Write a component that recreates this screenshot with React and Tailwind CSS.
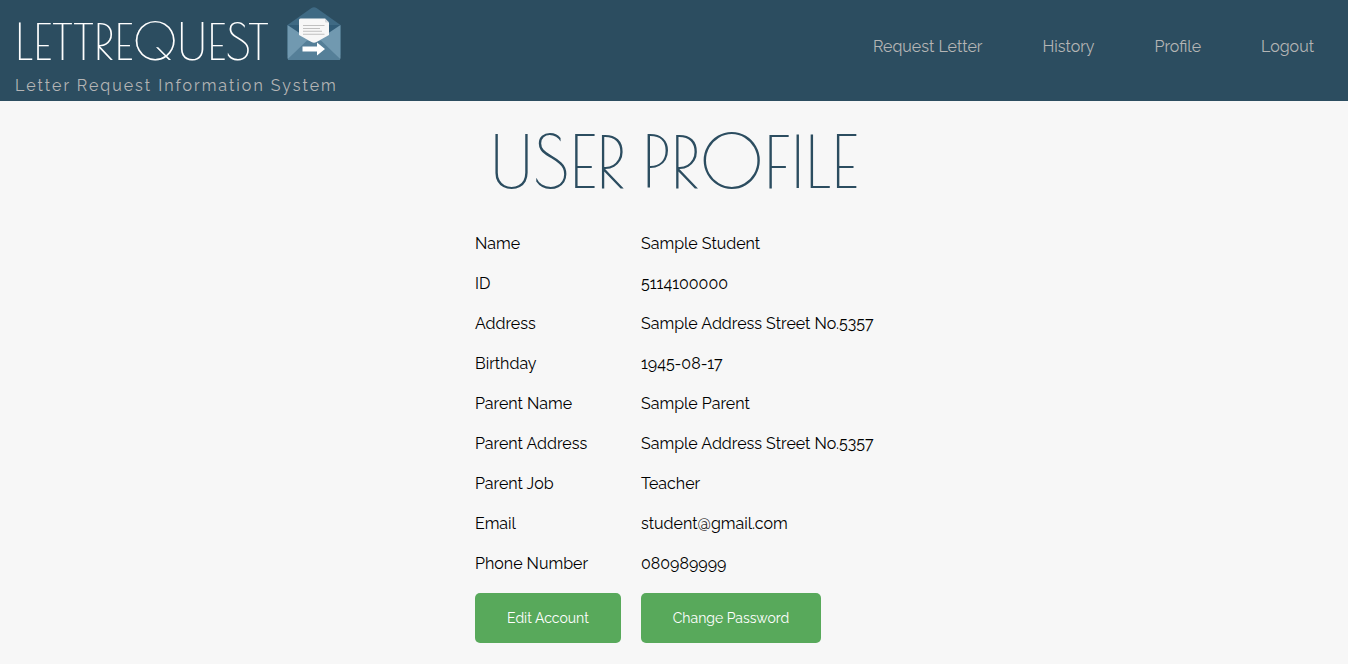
const links = ["Request Letter", "History", "Profile", "Logout"];

const details = [
  ["Name", "Sample Student"],
  ["ID", "5114100000"],
  ["Address", "Sample Address Street No.5357"],
  ["Birthday", "1945-08-17"],
  ["Parent Name", "Sample Parent"],
  ["Parent Address", "Sample Address Street No.5357"],
  ["Parent Job", "Teacher"],
  ["Email", "student@gmail.com"],
  ["Phone Number", "080989999"],
];

function EnvelopeIcon() {
  return (
    <svg viewBox="0 0 54 54" className="h-[54px] w-[54px] shrink-0" aria-hidden="true">
      <path d="M.5 18 24.500 1q2.500-1.600 5 0L53.500 18Z" fill="#3f6a84" />
      <path d="M.5 18h53v30H.5Z" fill="#315c77" />
      <path d="M12 13q0-1.500 1.500-1.500H38l4 4V29L27 40 12 29Z" fill="#f7f7f7" />
      <path d="M38 11.500v3q0 1 1 1h3Z" fill="#d5d9dc" />
      <path d="M.5 18 24.500 34q2.500 1.500 5 0L53.500 18V51q0 2-2 2h-49q-2 0-2-2Z" fill="#7199b0" />
      <path d="M.8 52 20 33.500l7 1.500 7-1.500L53.200 52q-.5 1-1.700 1h-49q-1.200 0-1.700-1Z" fill="#557f98" />
      <path d="M12 25.500V28L24.500 35q2.500 1.300 5 0L42 28V25.500Z" fill="#f7f7f7" />
      <path d="M16 18.500h21.500M16 21.500h17M16 24.300h19M16 27.200h21.500" stroke="#c0c0c0" strokeWidth="1.100" />
      <path d="M15.500 39.500H30v-4L38 42l-8 6.500v-4H15.500Z" fill="#fff" />
    </svg>
  );
}

export default function App() {
  return (
    <div className="min-h-screen bg-[#f7f7f7] font-['Raleway','Lato',sans-serif] text-base text-black">
      <header className="flex items-start justify-between bg-[#2c4d60] pr-[34px] pl-[15px] text-[#b5b5b5]">
        <div className="pt-[7px] pb-[3px]">
          <div className="flex items-start gap-[18px]">
            <span className="pt-1 font-['Poiret_One','Lato',sans-serif] text-[50px] leading-[60px] text-white">
              LETTREQUEST
            </span>
            <EnvelopeIcon />
          </div>
          <p className="pt-[3px] leading-6 tracking-[2px]">Letter Request Information System</p>
        </div>
        <nav className="flex gap-[60px] pt-[35px] leading-6">
          {links.map((label) => (
            <a key={label} href="#">
              {label}
            </a>
          ))}
        </nav>
      </header>
      <main className="flex flex-col items-center px-4 pb-5">
        <h1 className="pt-5 pb-[22px] font-['Poiret_One','Lato',sans-serif] text-[72px] leading-[80px] text-[#2c4d60]">
          USER PROFILE
        </h1>
        <table className="w-[398px] table-fixed border-collapse text-left whitespace-nowrap">
          <tbody>
            {details.map(([label, value]) => (
              <tr key={label} className="h-10">
                <th scope="row" className="w-[166px] p-0 pt-[2px] font-normal">
                  {label}
                </th>
                <td className="p-0 pt-[2px]">{value}</td>
              </tr>
            ))}
            <tr>
              <td className="p-0 pt-[10px]">
                <button type="button" className="h-[50px] w-[146px] rounded-[5px] bg-[#58a95b] text-sm text-white">
                  Edit Account
                </button>
              </td>
              <td className="p-0 pt-[10px]">
                <button type="button" className="h-[50px] w-[180px] rounded-[5px] bg-[#58a95b] text-sm text-white">
                  Change Password
                </button>
              </td>
            </tr>
          </tbody>
        </table>
      </main>
    </div>
  );
}
